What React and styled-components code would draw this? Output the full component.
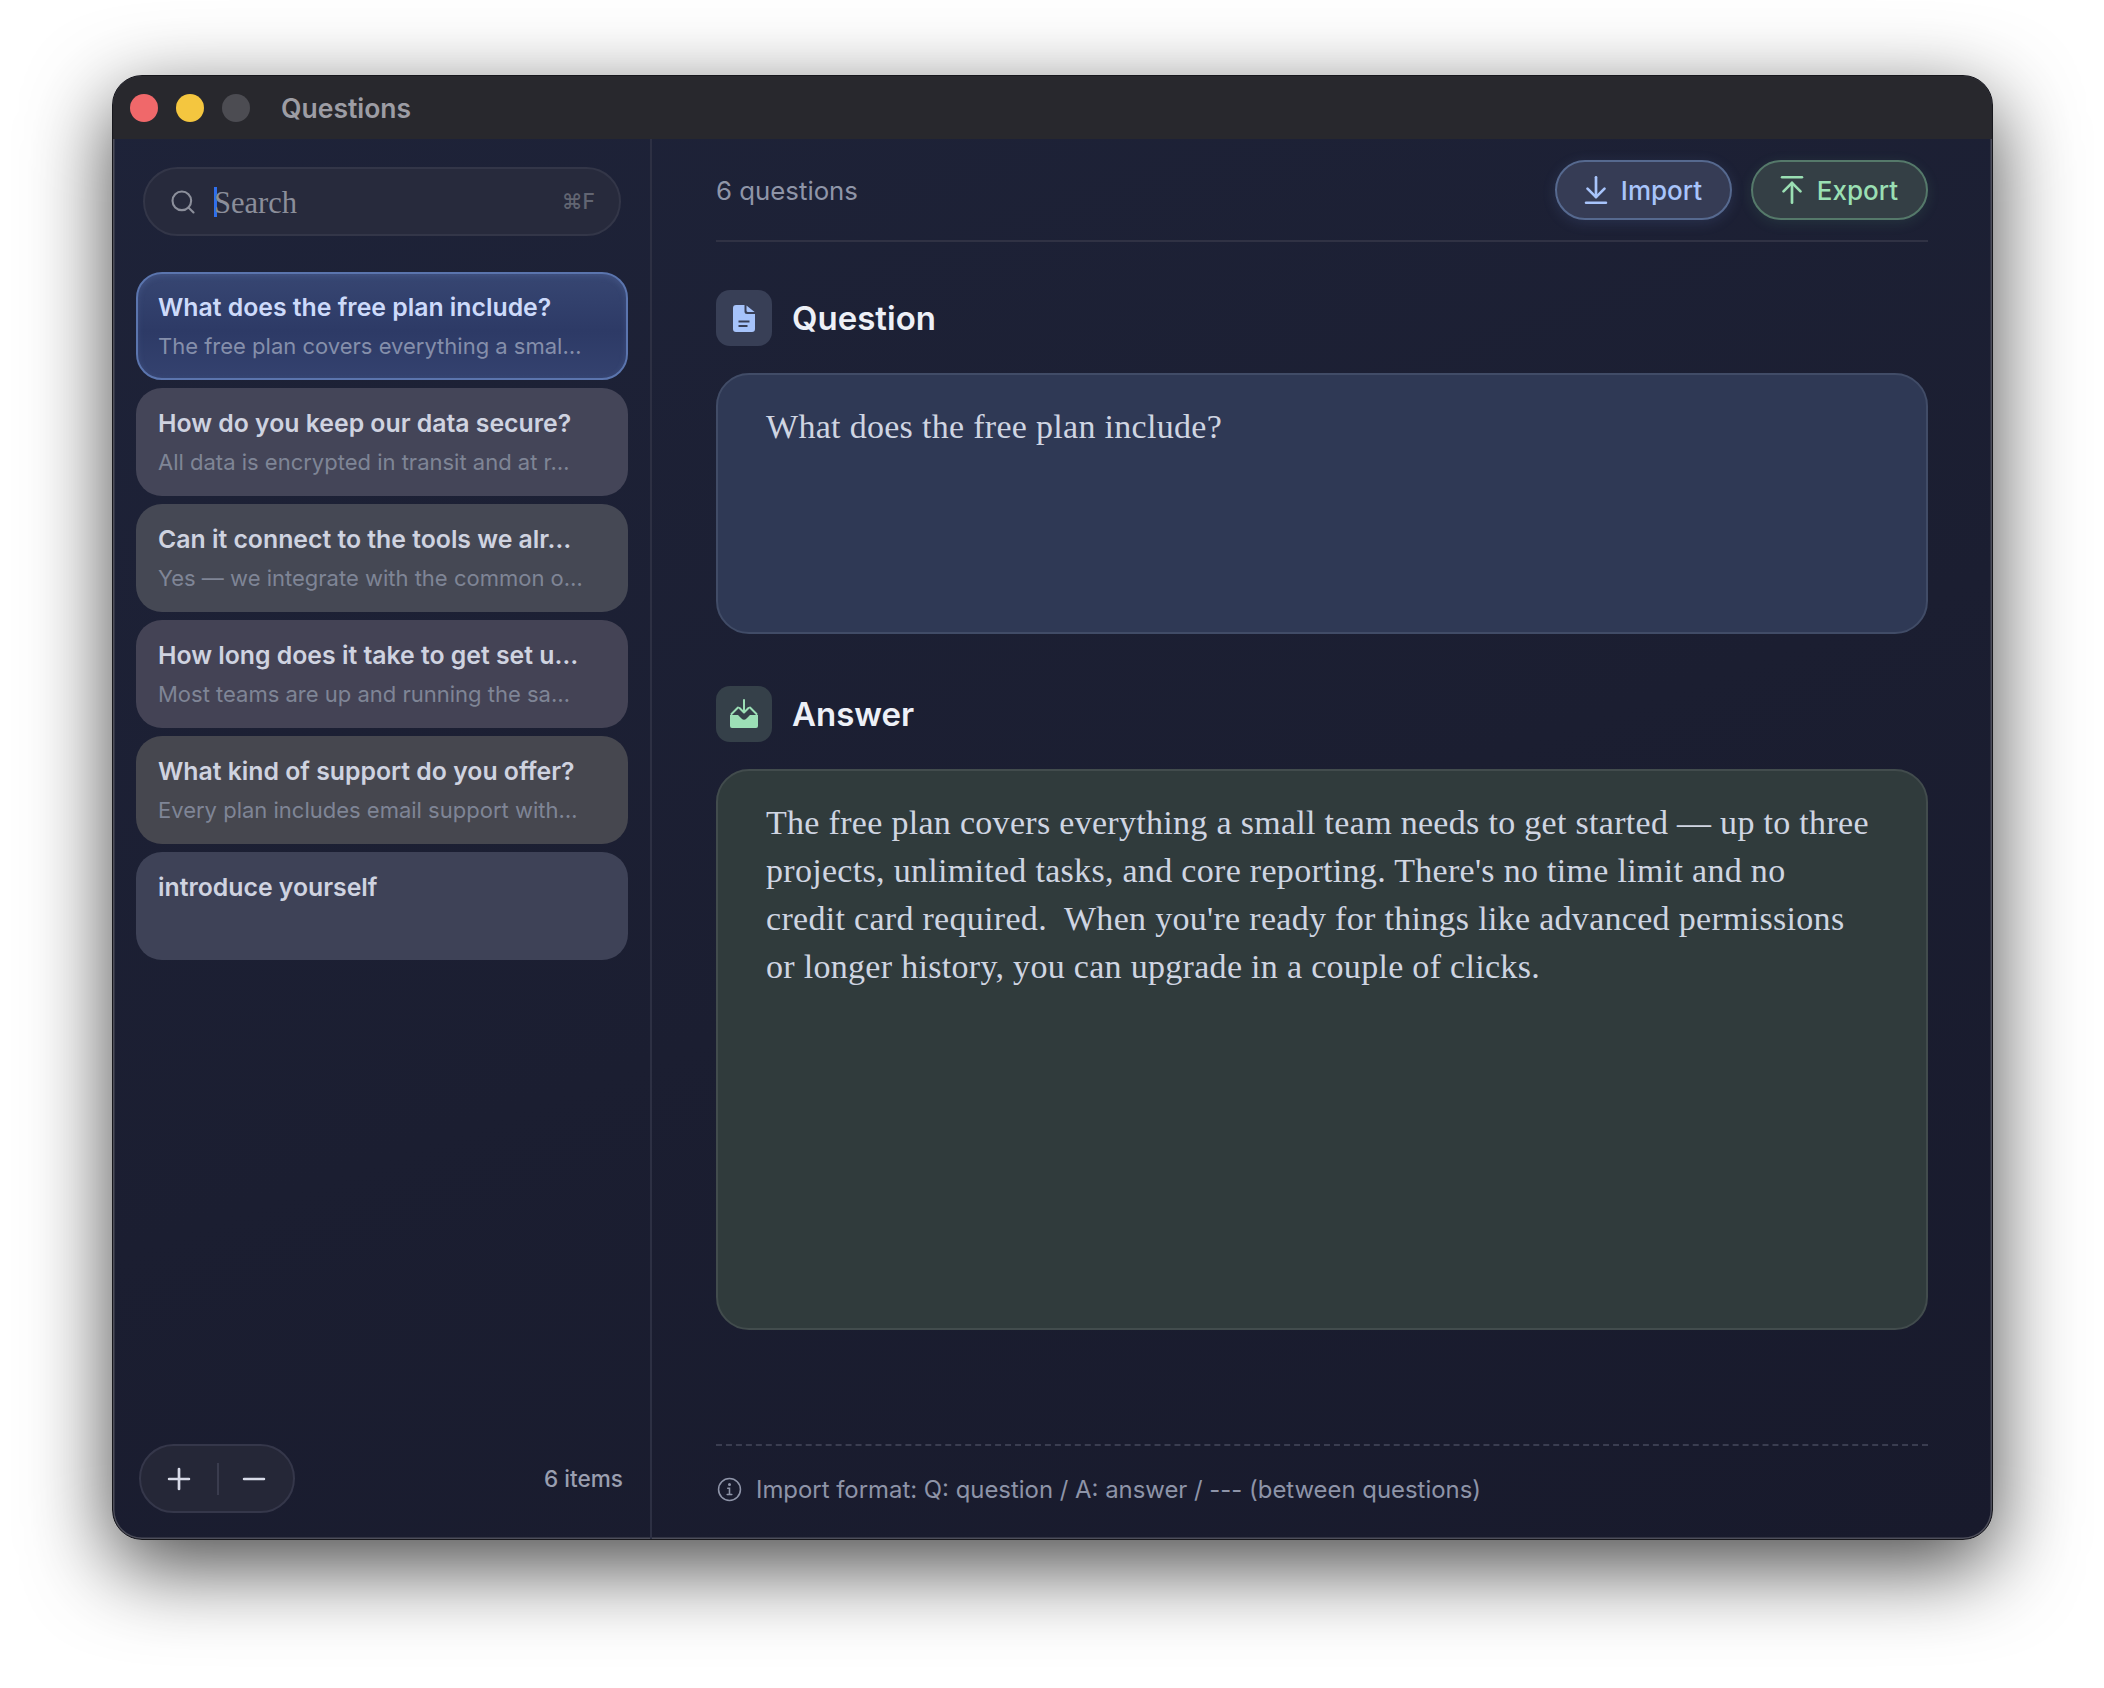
import React from 'react';
import styled, { createGlobalStyle } from 'styled-components';
import { Search, ArrowDownToLine, ArrowUpToLine, Plus, Minus } from 'lucide-react';

const questions = [
  { title: 'What does the free plan include?', sub: 'The free plan covers everything a smal…', tone: '#3a4670', active: true },
  { title: 'How do you keep our data secure?', sub: 'All data is encrypted in transit and at r…', tone: '#444558' },
  { title: 'Can it connect to the tools we alr…', sub: 'Yes — we integrate with the common o…', tone: '#454854' },
  { title: 'How long does it take to get set u…', sub: 'Most teams are up and running the sa…', tone: '#444355' },
  { title: 'What kind of support do you offer?', sub: 'Every plan includes email support with…', tone: '#46474f' },
  { title: 'introduce yourself', sub: '', tone: '#3e4257' },
];

const answer = "The free plan covers everything a small team needs to get started — up to three projects, unlimited tasks, and core reporting. There's no time limit and no credit card required.  When you're ready for things like advanced permissions or longer history, you can upgrade in a couple of clicks.";

const GlobalStyle = createGlobalStyle`
  html, body {
    margin: 0;
    padding: 0;
    background: #fff;
  }
  * {
    box-sizing: border-box;
  }
`;

const Page = styled.div`
  width: 2104px;
  height: 1688px;
  padding: 75px 111px 148px 112px;
  font-family: Inter, "Liberation Sans", sans-serif;
`;

const Window = styled.div`
  height: 100%;
  display: flex;
  flex-direction: column;
  overflow: hidden;
  border-radius: 30px;
  background: linear-gradient(160deg, #1e2339 0%, #1b1e31 55%, #181a2c 100%);
  border: 1px solid #17171c;
  box-shadow: inset 0 0 0 1.5px #4d4e5a, 0 26px 84px rgba(0, 0, 0, 0.72);
`;

const TitleBar = styled.div`
  height: 63px;
  flex: none;
  display: flex;
  align-items: center;
  padding-left: 17px;
  background: #28282d;
`;

const Light = styled.span`
  width: 28px;
  height: 28px;
  margin-right: 18px;
  border-radius: 50%;
  background: ${p => p.$color};
`;

const WindowTitle = styled.span`
  margin-left: 13px;
  font-size: 26.5px;
  font-weight: 600;
  color: #9d9da4;
`;

const Body = styled.div`
  flex: 1;
  min-height: 0;
  display: flex;
`;

const Sidebar = styled.aside`
  width: 539px;
  flex: none;
  display: flex;
  flex-direction: column;
  padding: 28px 22px 26px 23px;
  border-right: 2px solid #2d3043;
`;

const SearchBox = styled.div`
  height: 69px;
  margin: 0 7px 36px 7px;
  display: flex;
  align-items: center;
  padding: 0 24px 0 24px;
  border-radius: 35px;
  background: #272a3c;
  border: 2px solid #333648;
  color: #8c8f9b;
`;

const Caret = styled.span`
  width: 3px;
  height: 30px;
  margin-left: 17px;
  background: #2f6fed;
`;

const SearchText = styled.span`
  flex: 1;
  margin: 3px 0 0 -3px;
  font-family: "Liberation Serif", serif;
  font-size: 30.5px;
  color: #8b8e9a;
`;

const Shortcut = styled.span`
  font-size: 21px;
  font-weight: 500;
  color: #626572;
`;

const List = styled.div`
  display: flex;
  flex-direction: column;
  gap: 8px;
`;

const Row = styled.div`
  height: 108px;
  padding: 17px 22px;
  border-radius: 26px;
  background: ${p => p.$tone};
  ${p => p.$active && `
    border: 2px solid #5b75ae;
    padding: 15px 20px;
    background: linear-gradient(180deg, #374672 0%, #2d3a66 55%, #34426f 100%);
    box-shadow: inset 0 2px 6px rgba(120, 150, 210, 0.18);
  `}
`;

const RowTitle = styled.div`
  font-size: 24.8px;
  line-height: 36px;
  font-weight: 600;
  white-space: nowrap;
  overflow: hidden;
  color: ${p => (p.$active ? '#cddafa' : '#cfd3e0')};
`;

const RowSub = styled.div`
  margin-top: 4px;
  font-size: 22px;
  line-height: 34px;
  white-space: nowrap;
  overflow: hidden;
  color: ${p => (p.$active ? '#858fab' : '#7f8596')};
`;

const SideFooter = styled.div`
  margin-top: auto;
  padding: 0 5px 0 3px;
  display: flex;
  align-items: center;
  justify-content: space-between;
`;

const AddRemove = styled.div`
  width: 156px;
  height: 69px;
  display: flex;
  align-items: center;
  border-radius: 35px;
  background: #252737;
  border: 2px solid #35374a;
  color: #d8dbe8;
`;

const PillButton = styled.span`
  width: ${p => p.$width}px;
  display: flex;
  justify-content: center;
`;

const PillDivider = styled.span`
  width: 2px;
  height: 32px;
  background: #3a3c4e;
`;

const ItemCount = styled.span`
  font-size: 22.6px;
  font-weight: 500;
  color: #9a9fb0;
`;

const Main = styled.main`
  flex: 1;
  min-width: 0;
  display: flex;
  flex-direction: column;
  padding: 0 64px 0 64px;
`;

const Header = styled.header`
  height: 103px;
  flex: none;
  display: flex;
  align-items: center;
  gap: 19px;
  padding-top: 1px;
  border-bottom: 2px solid #303244;
`;

const Count = styled.span`
  margin-right: auto;
  font-size: 25.8px;
  color: #8f95a8;
`;

const ActionButton = styled.button`
  height: 60px;
  width: ${p => p.$width}px;
  display: flex;
  align-items: center;
  justify-content: center;
  gap: 8px;
  padding: 0 6px 0 0;
  font-family: Inter, "Liberation Sans", sans-serif;
  font-size: 26px;
  font-weight: 500;
  border-radius: 30px;
  color: ${p => p.$color};
  background: ${p => p.$bg};
  border: 2px solid ${p => p.$line};
  box-shadow: 0 3px 14px ${p => p.$glow};
`;

const SectionHead = styled.div`
  display: flex;
  align-items: center;
  gap: 20px;
  margin-top: ${p => p.$top}px;
  margin-bottom: 27px;
`;

const IconTile = styled.span`
  width: 56px;
  height: 56px;
  display: flex;
  align-items: center;
  justify-content: center;
  border-radius: 14px;
  background: ${p => p.$bg};
  color: ${p => p.$color};
`;

const SectionTitle = styled.h2`
  margin: 0;
  font-size: 33px;
  font-weight: 600;
  color: #edf0f7;
`;

const TextCard = styled.div`
  height: ${p => p.$height}px;
  padding: 28px 55px 0 48px;
  border-radius: 33px;
  white-space: pre-wrap;
  font-family: "Liberation Serif", serif;
  font-size: 34px;
  letter-spacing: 0.3px;
  line-height: 48px;
  color: #cfd5e2;
  background: ${p => p.$bg};
  border: 2px solid ${p => p.$line};
`;

const Hint = styled.footer`
  height: 95px;
  margin-top: auto;
  flex: none;
  display: flex;
  align-items: center;
  gap: 14px;
  padding: 0 0 6px 1px;
  border-top: 2px dashed #3a3d50;
  font-size: 23.9px;
  color: #8e94a8;
`;

const DocIcon = () => (
  <svg width="22" height="27" viewBox="0 0 22 27" fill="currentColor">
    <path fillRule="evenodd" d="M3 0h8.5v6.5a2.5 2.5 0 0 0 2.5 2.5h8v15a3 3 0 0 1-3 3H3a3 3 0 0 1-3-3V3a3 3 0 0 1 3-3zM5.5 15.5v2h11v-2zM5.5 20v2h9v-2z" />
    <path d="M13.5 0.6 21.6 7h-6.6a1.5 1.5 0 0 1-1.5-1.5z" />
  </svg>
);

const TrayIcon = () => (
  <svg width="30" height="30" viewBox="0 0 30 30" fill="none">
    <path d="M15 1v12M10.5 9 15 13.5 19.5 9" stroke="currentColor" strokeWidth="2" strokeLinecap="round" strokeLinejoin="round" />
    <path d="M9 8.5 2.5 15M21 8.5l6.5 6.5" stroke="currentColor" strokeWidth="2" strokeLinecap="round" />
    <path fill="currentColor" d="M1 16h8l3.5 3.5a3.5 3.5 0 0 0 5 0L21 16h8v11a2 2 0 0 1-2 2H3a2 2 0 0 1-2-2z" />
  </svg>
);

const InfoIcon = () => (
  <svg width="25" height="25" viewBox="0 0 24 24" fill="none" stroke="currentColor" strokeWidth="1.5" strokeLinecap="round">
    <circle cx="12" cy="12" r="10.5" />
    <path d="M10.3 10.8H12v6M9.8 16.8h4.4" />
    <circle cx="12" cy="7.3" r="0.7" fill="currentColor" />
  </svg>
);

export default function App() {
  return (
    <Page>
      <GlobalStyle />
      <Window>
        <TitleBar>
          <Light $color="#f0686a" />
          <Light $color="#f4c63f" />
          <Light $color="#4c4c52" />
          <WindowTitle>Questions</WindowTitle>
        </TitleBar>
        <Body>
          <Sidebar>
            <SearchBox>
              <Search size={28} strokeWidth={1.8} />
              <Caret />
              <SearchText>Search</SearchText>
              <Shortcut>⌘F</Shortcut>
            </SearchBox>
            <List>
              {questions.map(q => (
                <Row key={q.title} $tone={q.tone} $active={q.active}>
                  <RowTitle $active={q.active}>{q.title}</RowTitle>
                  {q.sub && <RowSub $active={q.active}>{q.sub}</RowSub>}
                </Row>
              ))}
            </List>
            <SideFooter>
              <AddRemove>
                <PillButton $width={76}><Plus size={34} strokeWidth={1.9} /></PillButton>
                <PillDivider />
                <PillButton $width={69}><Minus size={34} strokeWidth={1.9} /></PillButton>
              </AddRemove>
              <ItemCount>6 items</ItemCount>
            </SideFooter>
          </Sidebar>
          <Main>
            <Header>
              <Count>6 questions</Count>
              <ActionButton $width={177} $color="#a8c4fb" $bg="#363c55" $line="#56698f" $glow="rgba(110, 140, 210, 0.16)">
                <ArrowDownToLine size={34} strokeWidth={1.9} />
                Import
              </ActionButton>
              <ActionButton $width={177} $color="#9adfb3" $bg="#343f45" $line="#55796a" $glow="rgba(110, 200, 150, 0.12)">
                <ArrowUpToLine size={34} strokeWidth={1.9} />
                Export
              </ActionButton>
            </Header>
            <SectionHead $top={48}>
              <IconTile $bg="#383f56" $color="#a6c3fa"><DocIcon /></IconTile>
              <SectionTitle>Question</SectionTitle>
            </SectionHead>
            <TextCard $height={261} $bg="#2f3955" $line="#414c67">What does the free plan include?</TextCard>
            <SectionHead $top={52}>
              <IconTile $bg="#354049" $color="#9cdfb6"><TrayIcon /></IconTile>
              <SectionTitle>Answer</SectionTitle>
            </SectionHead>
            <TextCard $height={561} $bg="#303b3c" $line="#424c4d">{answer}</TextCard>
            <Hint>
              <InfoIcon />
              Import format: Q: question / A: answer / --- (between questions)
            </Hint>
          </Main>
        </Body>
      </Window>
    </Page>
  );
}
